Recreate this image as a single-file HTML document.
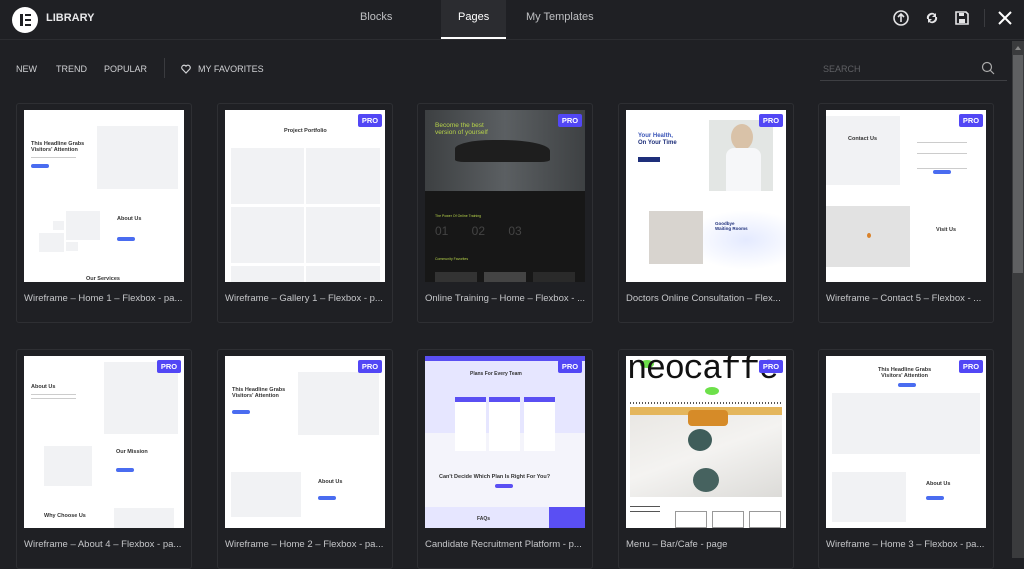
<!DOCTYPE html>
<html><head><meta charset="utf-8"><style>
*{margin:0;padding:0;box-sizing:border-box}
body{width:1024px;height:558px;overflow:hidden;background:#1f2024;font-family:"Liberation Sans",sans-serif;position:relative}
.a{position:absolute}
.hdr{left:0;top:0;width:1024px;height:40px;background:#1f2024;border-bottom:1px solid #2c2d31}
.card{position:absolute;width:176px;height:220px;border:1px solid #2e2f33;border-radius:3px}
.img{position:absolute;left:7px;top:6px;width:160px;height:172px;background:#fff;overflow:hidden}
.ttl{position:absolute;left:7px;top:189px;font-size:9.5px;color:#c6c7ca;white-space:nowrap}
.pro{position:absolute;right:3px;top:4px;width:24px;height:13px;background:#5247f5;border-radius:2px;color:#fff;font-size:7.5px;font-weight:bold;text-align:center;line-height:13px}
.g{position:absolute;background:#f1f2f4}
.t{position:absolute;font-weight:bold;color:#333;white-space:nowrap}
.b{position:absolute;background:#4a6cf0;border-radius:3px;height:4px;width:18px}
.ln{position:absolute;height:1px;background:#ccc}
</style></head><body>
<div class="a hdr"></div>
<div class="a" style="left:12px;top:7px;width:26px;height:26px;border-radius:50%;background:#fff"></div>
<div class="a" style="left:20px;top:14px;width:3px;height:12px;background:#1f2024"></div>
<div class="a" style="left:25px;top:14px;width:6px;height:2px;background:#1f2024"></div>
<div class="a" style="left:25px;top:19px;width:6px;height:2px;background:#1f2024"></div>
<div class="a" style="left:25px;top:24px;width:6px;height:2px;background:#1f2024"></div>
<div class="a" style="left:46px;top:12px;font-size:11px;font-weight:bold;color:#e8e8ea">LIBRARY</div>
<div class="a" style="left:441px;top:0;width:65px;height:39px;background:#2b2c30;border-bottom:2px solid #fff"></div>
<div class="a" style="left:360px;top:11px;font-size:11px;color:#bfc0c3">Blocks</div>
<div class="a" style="left:458px;top:11px;font-size:11px;color:#fff">Pages</div>
<div class="a" style="left:526px;top:11px;font-size:11px;color:#bfc0c3">My Templates</div>
<svg class="a" style="left:892px;top:9px" width="18" height="18" viewBox="0 0 18 18"><circle cx="9" cy="9" r="7" fill="none" stroke="#e4e4e6" stroke-width="1.6"/><path d="M9 13V5M6 8l3-3 3 3" fill="none" stroke="#e4e4e6" stroke-width="1.6"/></svg>
<svg class="a" style="left:924px;top:10px" width="16" height="16" viewBox="0 0 16 16"><path d="M3 9a5 5 0 0 1 8-5l1-1v4H8l2-2a3.5 3.5 0 0 0-5 4zM13 7a5 5 0 0 1-8 5l-1 1V9h4l-2 2a3.5 3.5 0 0 0 5-4z" fill="#e4e4e6"/></svg>
<svg class="a" style="left:954px;top:10px" width="16" height="16" viewBox="0 0 16 16"><path d="M2 2h10l2 2v10H2z" fill="none" stroke="#e4e4e6" stroke-width="1.6"/><rect x="5" y="3" width="5" height="3" fill="#e4e4e6"/><rect x="5" y="9" width="6" height="4" fill="#e4e4e6"/></svg>
<div class="a" style="left:984px;top:9px;width:1px;height:18px;background:#3a3b3f"></div>
<svg class="a" style="left:997px;top:10px" width="16" height="16" viewBox="0 0 16 16"><path d="M2 2l12 12M14 2L2 14" stroke="#fff" stroke-width="2"/></svg>
<div class="a" style="left:1012px;top:41px;width:12px;height:517px;background:#3a3b3d"></div>
<div class="a" style="left:1013px;top:55px;width:10px;height:218px;background:#5f6062"></div>
<div class="a" style="left:1015px;top:46px;width:0;height:0;border-left:3px solid transparent;border-right:3px solid transparent;border-bottom:4px solid #888"></div>
<div class="a" style="left:16px;top:64px;font-size:9px;color:#d0d1d4">NEW</div>
<div class="a" style="left:56px;top:64px;font-size:9px;color:#d0d1d4">TREND</div>
<div class="a" style="left:104px;top:64px;font-size:9px;color:#d0d1d4">POPULAR</div>
<div class="a" style="left:164px;top:58px;width:1px;height:20px;background:#3a3b3f"></div>
<svg class="a" style="left:181px;top:64px" width="10" height="10" viewBox="0 0 10 10"><path d="M5 9L1.2 5A2.2 2.2 0 0 1 5 2.2 2.2 2.2 0 0 1 8.8 5z" fill="none" stroke="#d0d1d4" stroke-width="1.2"/></svg>
<div class="a" style="left:198px;top:64px;font-size:9px;color:#d0d1d4">MY FAVORITES</div>
<div class="a" style="left:823px;top:64px;font-size:9px;color:#5f6064">SEARCH</div>
<div class="a" style="left:820px;top:80px;width:187px;height:1px;background:#3e3f43"></div>
<svg class="a" style="left:981px;top:61px" width="14" height="14" viewBox="0 0 14 14"><circle cx="6" cy="6" r="4.5" fill="none" stroke="#aaa" stroke-width="1.2"/><path d="M9.3 9.3L13 13" stroke="#aaa" stroke-width="1.2"/></svg>

<!-- Row 1 -->
<div class="card" style="left:16px;top:103px"><div class="img">
<div class="g" style="left:73px;top:16px;width:81px;height:63px"></div>
<div class="t" style="left:7px;top:31px;font-size:5.5px;line-height:6px">This Headline Grabs<br>Visitors' Attention</div>
<div class="ln" style="left:7px;top:47px;width:45px"></div><div class="b" style="left:7px;top:54px"></div>
<div class="g" style="left:42px;top:101px;width:34px;height:29px"></div><div class="g" style="left:15px;top:123px;width:25px;height:19px"></div><div class="g" style="left:29px;top:111px;width:11px;height:9px"></div><div class="g" style="left:42px;top:132px;width:12px;height:9px"></div>
<div class="t" style="left:93px;top:106px;font-size:5.5px">About Us</div><div class="b" style="left:93px;top:127px"></div>
<div class="t" style="left:62px;top:166px;font-size:5.5px">Our Services</div>
</div><div class="ttl">Wireframe – Home 1 – Flexbox - pa...</div></div>

<div class="card" style="left:217px;top:103px"><div class="img">
<div class="t" style="left:59px;top:18px;font-size:5.5px">Project Portfolio</div>
<div class="g" style="left:6px;top:38px;width:73px;height:56px"></div><div class="g" style="left:81px;top:38px;width:74px;height:56px"></div>
<div class="g" style="left:6px;top:97px;width:73px;height:56px"></div><div class="g" style="left:81px;top:97px;width:74px;height:56px"></div>
<div class="g" style="left:6px;top:156px;width:73px;height:20px"></div><div class="g" style="left:81px;top:156px;width:74px;height:20px"></div>
<div class="pro">PRO</div></div><div class="ttl">Wireframe – Gallery 1 – Flexbox - p...</div></div>

<div class="card" style="left:417px;top:103px"><div class="img" style="background:#171717">
<div class="a" style="left:0;top:0;width:160px;height:81px;background:linear-gradient(90deg,#3d4042,#5b5f62 50%,#3e4143)"></div>
<div class="a" style="left:30px;top:30px;width:95px;height:22px;background:#1e1e1e;border-radius:40% 50% 10% 10%"></div>
<div class="a" style="left:10px;top:12px;font-size:6.5px;color:#b7d34a;line-height:7px">Become the best<br>version of yourself</div>
<div class="a" style="left:10px;top:104px;font-size:3.5px;color:#b7d34a">The Power Of Online Training</div>
<div class="a" style="left:10px;top:114px;font-size:12px;color:#444">01&nbsp;&nbsp;&nbsp;&nbsp;&nbsp;&nbsp;&nbsp;02&nbsp;&nbsp;&nbsp;&nbsp;&nbsp;&nbsp;&nbsp;03</div>
<div class="a" style="left:10px;top:147px;font-size:3.5px;color:#b7d34a">Community Favorites</div>
<div class="a" style="left:10px;top:162px;width:42px;height:12px;background:#333"></div><div class="a" style="left:59px;top:162px;width:42px;height:12px;background:#444"></div><div class="a" style="left:108px;top:162px;width:42px;height:12px;background:#2a2a2a"></div>
<div class="pro">PRO</div></div><div class="ttl">Online Training – Home – Flexbox - ...</div></div>

<div class="card" style="left:618px;top:103px"><div class="img">
<div class="a" style="left:83px;top:10px;width:64px;height:71px;background:#e3e6e4"></div>
<div class="a" style="left:105px;top:14px;width:22px;height:26px;border-radius:50%;background:#d9c2a8"></div>
<div class="a" style="left:100px;top:38px;width:35px;height:43px;background:#f6f7f9;border-radius:8px 8px 0 0"></div>
<div class="a" style="left:60px;top:100px;width:120px;height:60px;background:radial-gradient(#e4eaff,#fff 70%)"></div>
<div class="a" style="left:12px;top:23px;font-size:6px;font-weight:bold;color:#3a55b8;line-height:7px">Your Health,<br><span style="color:#1e2f7a">On Your Time</span></div>
<div class="a" style="left:12px;top:47px;width:22px;height:5px;background:#1e2f7a"></div>
<div class="a" style="left:23px;top:101px;width:54px;height:53px;background:#d8d4cf"></div>
<div class="a" style="left:89px;top:111px;font-size:4.5px;font-weight:bold;color:#1e2f7a;line-height:5px">Goodbye<br>Waiting Rooms</div>
<div class="pro">PRO</div></div><div class="ttl">Doctors Online Consultation – Flex...</div></div>

<div class="card" style="left:818px;top:103px"><div class="img">
<div class="g" style="left:0;top:6px;width:74px;height:69px"></div>
<div class="t" style="left:22px;top:26px;font-size:5.5px">Contact Us</div>
<div class="ln" style="left:91px;top:32px;width:50px"></div><div class="ln" style="left:91px;top:43px;width:50px"></div><div class="ln" style="left:91px;top:58px;width:50px"></div>
<div class="b" style="left:107px;top:60px"></div>
<div class="a" style="left:0;top:96px;width:84px;height:61px;background:#e2e2e2"></div>
<div class="a" style="left:41px;top:123px;width:4px;height:5px;background:#d9822b;border-radius:50%"></div>
<div class="t" style="left:110px;top:117px;font-size:5.5px">Visit Us</div>
<div class="pro">PRO</div></div><div class="ttl">Wireframe – Contact 5 – Flexbox - ...</div></div>

<!-- Row 2 -->
<div class="card" style="left:16px;top:349px"><div class="img">
<div class="g" style="left:80px;top:6px;width:74px;height:72px"></div>
<div class="t" style="left:7px;top:28px;font-size:5.5px">About Us</div>
<div class="ln" style="left:7px;top:38px;width:45px"></div><div class="ln" style="left:7px;top:42px;width:45px"></div>
<div class="g" style="left:20px;top:90px;width:48px;height:40px"></div>
<div class="t" style="left:92px;top:93px;font-size:5.5px">Our Mission</div><div class="b" style="left:92px;top:112px"></div>
<div class="t" style="left:20px;top:157px;font-size:5.5px">Why Choose Us</div>
<div class="g" style="left:90px;top:152px;width:60px;height:20px"></div>
<div class="pro">PRO</div></div><div class="ttl">Wireframe – About 4 – Flexbox - pa...</div></div>

<div class="card" style="left:217px;top:349px"><div class="img">
<div class="g" style="left:73px;top:16px;width:81px;height:63px"></div>
<div class="t" style="left:7px;top:31px;font-size:5.5px;line-height:6px">This Headline Grabs<br>Visitors' Attention</div>
<div class="b" style="left:7px;top:54px"></div>
<div class="g" style="left:6px;top:116px;width:70px;height:45px"></div>
<div class="t" style="left:93px;top:123px;font-size:5.5px">About Us</div><div class="b" style="left:93px;top:140px"></div>
<div class="pro">PRO</div></div><div class="ttl">Wireframe – Home 2 – Flexbox - pa...</div></div>

<div class="card" style="left:417px;top:349px"><div class="img" style="background:#f4f4fb">
<div class="a" style="left:0;top:5px;width:160px;height:72px;background:#e6e6ff"></div>
<div class="a" style="left:0;top:0;width:160px;height:5px;background:#5a4ff3"></div>
<div class="t" style="left:45px;top:15px;font-size:5px">Plans For Every Team</div>
<div class="a" style="left:30px;top:41px;width:31px;height:54px;background:#fff;border-top:5px solid #5a4ff3"></div>
<div class="a" style="left:64px;top:41px;width:31px;height:54px;background:#fff;border-top:5px solid #5a4ff3"></div>
<div class="a" style="left:99px;top:41px;width:31px;height:54px;background:#fff;border-top:5px solid #5a4ff3"></div>
<div class="t" style="left:14px;top:118px;font-size:5.5px">Can't Decide Which Plan Is Right For You?</div>
<div class="a" style="left:70px;top:128px;width:18px;height:4px;background:#5a4ff3;border-radius:2px"></div>
<div class="a" style="left:0;top:151px;width:160px;height:21px;background:#e6e6ff"></div>
<div class="a" style="left:124px;top:151px;width:36px;height:21px;background:#5a4ff3"></div>
<div class="t" style="left:52px;top:160px;font-size:5px">FAQs</div>
<div class="pro">PRO</div></div><div class="ttl">Candidate Recruitment Platform - p...</div></div>

<div class="card" style="left:618px;top:349px"><div class="img">
<div class="a" style="left:14px;top:4px;width:14px;height:8px;border-radius:50%;background:#6de04a"></div>
<div class="a" style="left:79px;top:31px;width:14px;height:8px;border-radius:50%;background:#6de04a"></div>
<div class="a" style="left:1px;top:-5px;font-family:'Liberation Mono',monospace;font-size:34px;color:#111;letter-spacing:-1.6px">neocaffe</div>
<div class="a" style="left:4px;top:46px;width:152px;height:2px;background:repeating-linear-gradient(90deg,#555 0 1px,#fff 1px 3px)"></div>
<div class="a" style="left:4px;top:51px;width:152px;height:90px;background:linear-gradient(160deg,#e8e6e2,#f4f3f1 50%,#dcdbd8)"></div>
<div class="a" style="left:4px;top:51px;width:152px;height:8px;background:#e4b65c"></div>
<div class="a" style="left:62px;top:54px;width:40px;height:16px;background:#d68b28;border-radius:4px"></div>
<div class="a" style="left:62px;top:73px;width:24px;height:22px;border-radius:50%;background:#3f5d5a"></div>
<div class="a" style="left:67px;top:112px;width:26px;height:24px;border-radius:50%;background:#46625f"></div>
<div class="ln" style="left:4px;top:150px;width:30px;background:#555"></div><div class="ln" style="left:4px;top:155px;width:30px;background:#555"></div>
<div class="a" style="left:49px;top:155px;width:32px;height:17px;border:1px solid #999"></div><div class="a" style="left:86px;top:155px;width:32px;height:17px;border:1px solid #999"></div><div class="a" style="left:123px;top:155px;width:32px;height:17px;border:1px solid #999"></div>
<div class="pro">PRO</div></div><div class="ttl">Menu – Bar/Cafe - page</div></div>

<div class="card" style="left:818px;top:349px"><div class="img">
<div class="t" style="left:52px;top:11px;font-size:5.5px;line-height:6px;text-align:center">This Headline Grabs<br>Visitors' Attention</div>
<div class="b" style="left:72px;top:27px"></div>
<div class="g" style="left:6px;top:37px;width:148px;height:61px"></div>
<div class="g" style="left:6px;top:116px;width:74px;height:50px"></div>
<div class="t" style="left:100px;top:125px;font-size:5.5px">About Us</div><div class="b" style="left:100px;top:140px"></div>
<div class="pro">PRO</div></div><div class="ttl">Wireframe – Home 3 – Flexbox - pa...</div></div>
</body></html>
